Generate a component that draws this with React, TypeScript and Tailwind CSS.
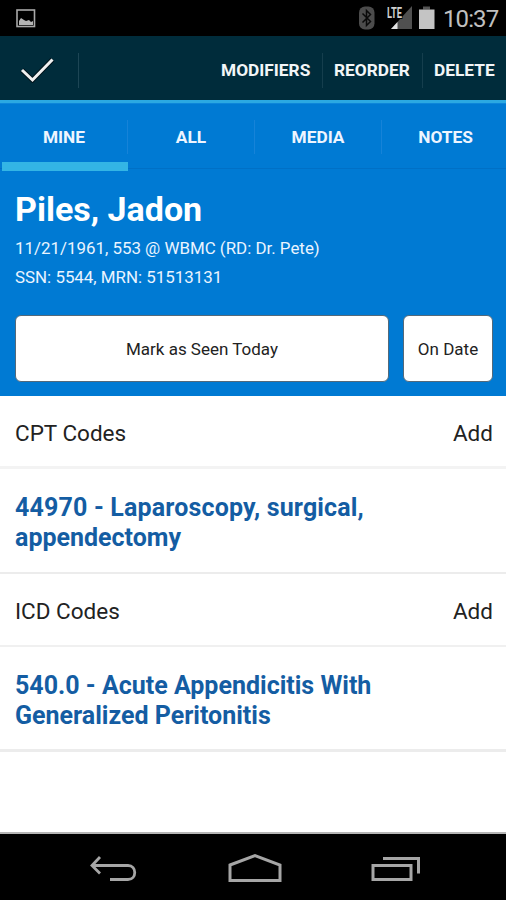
import React from "react";

const tabs = ["MINE", "ALL", "MEDIA", "NOTES"];

const StatusBar = () => (
  <div className="flex h-9 items-center justify-between bg-black pl-4 pr-2">
    <svg className="mt-px h-[19px] w-[20px]" viewBox="0 0 20 19" fill="none">
      <rect x="1" y="1" width="17.5" height="16.5" stroke="#a9a9a9" strokeWidth="1.6" />
      <path d="M3 16v-4l2-3 3 2 2 1 3-1 2 2 2-1v4z" fill="#b5b5b5" />
    </svg>
    <div className="flex items-center">
      <svg className="h-[24px] w-[16px]" viewBox="0 0 16 24" fill="none">
        <rect x="0" y="0.5" width="15.5" height="23" rx="6" fill="#4c4c4c" />
        <path d="M3.5 7.500l8 8-4 4v-15l4 4-8 8" stroke="#0a0a0a" strokeWidth="1.5" />
      </svg>
      <svg className="ml-3 h-[24px] w-[26px]" viewBox="0 0 26 24">
        <path d="M25 0v23H4z" fill="#505050" />
        <path d="M10.500 16v7H4z" fill="#e4e4e4" />
        <text x="0" y="11.500" fill="#d0d0d0" fontFamily="Roboto, sans-serif" fontSize="14" fontWeight="700" textLength="15" lengthAdjust="spacingAndGlyphs" stroke="#000" strokeWidth="2" paintOrder="stroke">LTE</text>
      </svg>
      <svg className="ml-[6px] h-[24px] w-[16px]" viewBox="0 0 16 24">
        <path d="M4 0.500h7v3H4z" fill="#555" />
        <path d="M0 3.500h15.500V23H0z" fill="#c4c4c4" />
      </svg>
      <span className="ml-[8px] mt-[2px] w-[55px] whitespace-nowrap text-[24px] leading-9 tracking-[-0.9px] text-[#c0c0c0]">10:37</span>
    </div>
  </div>
);

const ActionBar = () => (
  <div className="flex h-[64px] items-center bg-[#002c3b] pt-[4px] text-[17.3px] font-bold text-[#f2f6f8]">
    <div className="flex h-[35px] w-[79px] items-center border-r border-[#1d4655] pl-[20px]">
      <svg className="h-[26px] w-[35px]" viewBox="0 0 35 26" fill="none">
        <path d="M2 13l10.500 10L32.500 2.500" stroke="#00141c" strokeWidth="5" />
        <path d="M2 13l10.500 10L32.500 2.500" stroke="#f0f0f0" strokeWidth="3" />
      </svg>
    </div>
    <div className="ml-auto flex h-[35px] items-center leading-[35px]">
      <span className="w-[102px] border-r border-[#153e4d]">MODIFIERS</span>
      <span className="w-[100px] border-r border-[#153e4d] pl-[11px]">REORDER</span>
      <span className="w-[83px] pl-[11px]">DELETE</span>
    </div>
  </div>
);

const TabBar = () => (
  <div className="relative h-[68px] border-t border-[#0d86d9] pt-[16px] text-[17.3px] font-bold text-[#eef5ff]">
    <div className="grid grid-cols-[127px_127px_127px_127px] pl-px">
      {tabs.map((tab) => (
        <div key={tab} className="h-[34px] border-r border-[#1683d8] text-center leading-[35px] last:border-0">
          {tab}
        </div>
      ))}
    </div>
    <div className="absolute bottom-[2px] left-0 h-px w-full bg-[#0070c6]" />
    <div className="absolute bottom-0 left-[2px] h-[9px] w-[126px] bg-[#33b5e5]" />
  </div>
);

const CodeHeader = ({ title }: { title: string }) => (
  <div className="flex items-center justify-between pl-[15px] pr-[13px] pt-[5px] text-[22.5px] text-[#222]">
    <h2>{title}</h2>
    <button>Add</button>
  </div>
);

const App = () => {
  return (
    <div className="flex h-[900px] w-[506px] flex-col overflow-hidden bg-white font-['Roboto',sans-serif]">
      <StatusBar />
      <ActionBar />
      <div className="h-[3px] bg-[#2ba9e2]" />

      <div className="h-[293px] bg-[#007ad3] text-white">
        <TabBar />
        <div className="px-[15px]">
          <h1 className="mt-[18px] text-[34px] font-bold leading-[40px]">Piles, Jadon</h1>
          <p className="mt-[5px] text-[16.9px] leading-[29px] text-[#eaf4ff]">11/21/1961, 553 @ WBMC (RD: Dr. Pete)</p>
          <p className="text-[16.9px] leading-[29px] text-[#eaf4ff]">SSN: 5544, MRN: 51513131</p>
          <div className="mt-[23px] flex gap-[14px] text-[17px] text-[#222]">
            <button className="h-[67px] w-[374px] shrink-0 rounded-md border border-[#53697a] bg-white pt-[2px]">Mark as Seen Today</button>
            <button className="h-[67px] w-[90px] shrink-0 rounded-md border border-[#53697a] bg-white pt-[2px]">On Date</button>
          </div>
        </div>
      </div>

      <div className="grid h-[73px] border-b-[3px] border-[#f3f3f3]">
        <CodeHeader title="CPT Codes" />
      </div>
      <div className="h-[105px] border-b-2 border-[#ececec] px-[15px] pt-[24px] text-[25px] font-bold leading-[30px] tracking-[0.16px] text-[#145da3]">
        44970 - Laparoscopy, surgical,<br />
        <span className="tracking-normal">appendectomy</span>
      </div>
      <div className="grid h-[73px] border-b-2 border-[#f0f0f0]">
        <CodeHeader title="ICD Codes" />
      </div>
      <div className="h-[105px] border-b-[3px] border-[#ececec] px-[15px] pt-[24px] text-[25px] font-bold leading-[30px] text-[#145da3]">
        540.0 - Acute Appendicitis With<br />Generalized Peritonitis
      </div>

      <div className="mt-auto flex h-[68px] justify-between border-t-2 border-[#b5b5b5] bg-black pl-[89px] pr-[85px] pt-[19px]">
        <svg className="h-[32px] w-[50px]" viewBox="0 0 50 32" fill="none" stroke="#a6a6a6" strokeWidth="2.800">
          <path d="M11 4L3 12.500l8 8" />
          <path d="M3 12.500h36c9 0 9 14 0 14H21" />
        </svg>
        <svg className="h-[32px] w-[54px]" viewBox="0 0 54 32" fill="none" stroke="#a6a6a6" strokeWidth="3">
          <path d="M2 12L27 2.500 52 12v15.500H2z" />
        </svg>
        <svg className="h-[32px] w-[51px]" viewBox="0 0 51 32" fill="none" stroke="#a6a6a6" strokeWidth="3">
          <path d="M3 12.500h38v14H3zM13 5.500h35.500v15" />
        </svg>
      </div>
    </div>
  );
};

export default App;
